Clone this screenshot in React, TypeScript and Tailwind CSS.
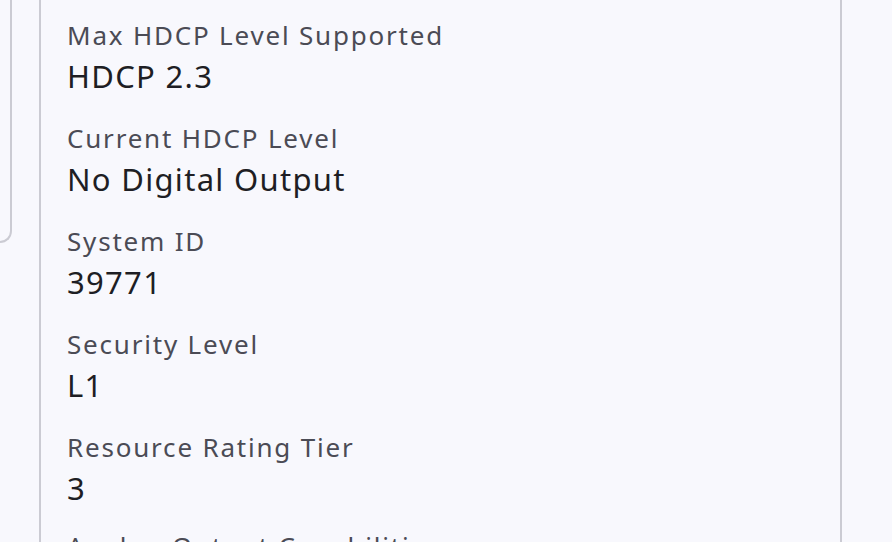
const rows = [
  { label: "Max HDCP Level Supported", value: "HDCP 2.3" },
  { label: "Current HDCP Level", value: "No Digital Output" },
  { label: "System ID", value: "39771" },
  { label: "Security Level", value: "L1" },
  { label: "Resource Rating Tier", value: "3" },
  { label: "Analog Output Capabilities", value: "" },
];

export default function App() {
  return (
    <div className="flex h-[542px] w-[892px] items-start overflow-hidden bg-[#f8f8fd] font-['Noto_Sans',sans-serif]">
      {/* left card, mostly scrolled off */}
      <div className="h-[243px] w-[12px] shrink-0 rounded-br-[14px] border-r-2 border-b-2 border-[#cbcbd3]" />
      <div className="ml-[27px] h-full w-[803px] shrink-0 border-x-2 border-[#cbcbd3] pl-[26px] pt-[17px]">
        {rows.map((r, i) => (
          <div key={r.label} className={i === 4 ? "mb-[17px]" : "mb-[21px]"}>
            <div className="text-[26px] leading-[36px] tracking-[1.8px] text-[#4b4b55]">{r.label}</div>
            <div className="text-[31px] leading-[46px] tracking-[1.3px] text-[#1e1e24]">{r.value}</div>
          </div>
        ))}
      </div>
    </div>
  );
}
